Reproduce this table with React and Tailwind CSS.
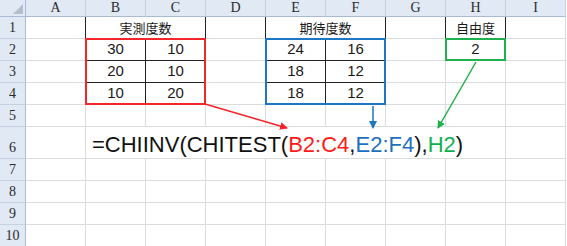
import React from "react";

const COLS = ["A", "B", "C", "D", "E", "F", "G", "H", "I"];
const ROWS = [1, 2, 3, 4, 5, 6, 7, 8, 9, 10];

// explicit grid placement (overlays span the whole grid, so no auto-placement)
const colStart = [
  "col-start-1", "col-start-2", "col-start-3", "col-start-4", "col-start-5",
  "col-start-6", "col-start-7", "col-start-8", "col-start-9", "col-start-10",
];
const rowStart = [
  "row-start-1", "row-start-2", "row-start-3", "row-start-4", "row-start-5", "row-start-6",
  "row-start-7", "row-start-8", "row-start-9", "row-start-10", "row-start-11",
];

// cell values
const values = {
  B1: "実測度数",
  E1: "期待度数",
  H1: "自由度",
  B2: "30", C2: "10",
  B3: "20", C3: "10",
  B4: "10", C4: "20",
  E2: "24", F2: "16",
  E3: "18", F3: "12",
  E4: "18", F4: "12",
  H2: "2",
};

const merged = ["B1", "E1"];
const hidden = ["C1", "F1"];
const blackRight = ["A1", "B1", "B2", "B3", "B4", "D1", "E1", "E2", "E3", "E4", "G1", "H1"];
const blackBottom = ["B2", "C2", "B3", "C3", "E2", "F2", "E3", "F3"];
const noRight = ["B6", "C6", "D6", "E6", "F6", "G6"];

const headerFont = { fontFamily: '"Liberation Serif", "Times New Roman", serif' };

function Formula() {
  return (
    <span className="whitespace-nowrap text-[22px] leading-[25px] text-[#111]" style={{ fontFamily: '"Liberation Sans", Arial, sans-serif' }}>
      =CHIINV(CHITEST(
      <span className="text-[#ff1a1a]">B2:C4</span>,
      <span className="text-[#1f6fc0]">E2:F4</span>),
      <span className="text-[#10b050]">H2</span>)
    </span>
  );
}

function Cell({ c, r }) {
  const id = COLS[c] + r;
  if (hidden.includes(id)) return null;
  const pos = `${colStart[c + 1]} ${rowStart[r]}`;
  const span = merged.includes(id) ? "col-span-2" : "";
  const right = noRight.includes(id)
    ? "border-r-0"
    : blackRight.includes(id)
    ? "border-r border-r-[#222]"
    : "border-r border-r-[#dcdcdc]";
  const bottom = blackBottom.includes(id) ? "border-b-[#222]" : "border-b-[#dcdcdc]";
  const isJp = r === 1;

  if (id === "B6") {
    return (
      <div className={`${pos} relative z-20 flex items-end border-b border-b-[#dcdcdc] pl-[6px] pb-[1px] overflow-visible`}>
        <Formula />
      </div>
    );
  }

  return (
    <div
      className={`${pos} ${span} ${right} border-b ${bottom} flex items-center justify-center bg-white text-[#1a1a1a] ${
        isJp ? "text-[13px]" : "text-[15px]"
      }`}
      style={{
        fontFamily: isJp
          ? '"Noto Sans CJK JP", "Noto Sans", sans-serif'
          : '"Liberation Sans", Arial, sans-serif',
      }}
    >
      {values[id]}
    </div>
  );
}

export default function App() {
  return (
    <div className="w-[567px] h-[246px] overflow-hidden bg-white">
      <div className="grid grid-cols-[26px_repeat(9,60px)] grid-rows-[17px_repeat(5,22px)_32px_repeat(4,22px)]">
        {/* corner */}
        <div className="col-start-1 row-start-1 flex items-end justify-end border-r border-b border-r-[#a8bbd3] border-b-[#a8bbd3] bg-[#e1e9f5] pr-[2px] pb-[2px]">
          <svg width="10" height="10" viewBox="0 0 10 10">
            <polygon points="10,0 10,10 0,10" fill="#b5bfcc" />
          </svg>
        </div>
        {/* column headers */}
        {COLS.map((c, i) => (
          <div
            key={c}
            className={`${colStart[i + 1]} row-start-1 flex items-center justify-center border-r border-b border-r-[#c4d2e4] border-b-[#a8bbd3] bg-[#e1e9f5] text-[14px] leading-none text-[#2b2b2b]`}
            style={headerFont}
          >
            {c}
          </div>
        ))}
        {ROWS.map((r) => (
          <React.Fragment key={r}>
            <div
              className={`col-start-1 ${rowStart[r]} flex items-end justify-center border-r border-b border-r-[#a8bbd3] border-b-[#c4d2e4] bg-[#e1e9f5] pb-[3px] text-[14px] leading-none text-[#2b2b2b]`}
              style={headerFont}
            >
              {r}
            </div>
            {COLS.map((c, i) => (
              <Cell key={c + r} c={i} r={r} />
            ))}
          </React.Fragment>
        ))}

        {/* selection boxes */}
        <div className="pointer-events-none z-10 col-start-3 col-span-2 row-start-3 row-span-3 -ml-px -mt-px border-2 border-[#f2262b]" />
        <div className="pointer-events-none z-10 col-start-6 col-span-2 row-start-3 row-span-3 -ml-px -mt-px border-2 border-[#1d77c4]" />
        <div className="pointer-events-none z-10 col-start-9 row-start-3 -ml-px -mt-px border-2 border-[#1fb14d]" />

        {/* arrows */}
        <svg
          className="pointer-events-none z-30 col-start-1 col-span-10 row-start-1 row-span-11"
          width="566"
          height="247"
          viewBox="0 0 566 247"
        >
          <defs>
            <marker id="ar" markerWidth="8" markerHeight="8" refX="7" refY="4" orient="auto" markerUnits="userSpaceOnUse">
              <polygon points="0,0 8,4 0,8" fill="#f2262b" />
            </marker>
            <marker id="ab" markerWidth="8" markerHeight="8" refX="7" refY="4" orient="auto" markerUnits="userSpaceOnUse">
              <polygon points="0,0 8,4 0,8" fill="#1d77c4" />
            </marker>
            <marker id="ag" markerWidth="8" markerHeight="8" refX="7" refY="4" orient="auto" markerUnits="userSpaceOnUse">
              <polygon points="0,0 8,4 0,8" fill="#1fb14d" />
            </marker>
          </defs>
          <line x1="205" y1="104" x2="287" y2="128" stroke="#f2262b" strokeWidth="1.5" markerEnd="url(#ar)" />
          <line x1="373" y1="106" x2="373" y2="128" stroke="#1d77c4" strokeWidth="1.5" markerEnd="url(#ab)" />
          <line x1="476" y1="62" x2="438" y2="128" stroke="#1fb14d" strokeWidth="1.5" markerEnd="url(#ag)" />
        </svg>
      </div>
    </div>
  );
}
